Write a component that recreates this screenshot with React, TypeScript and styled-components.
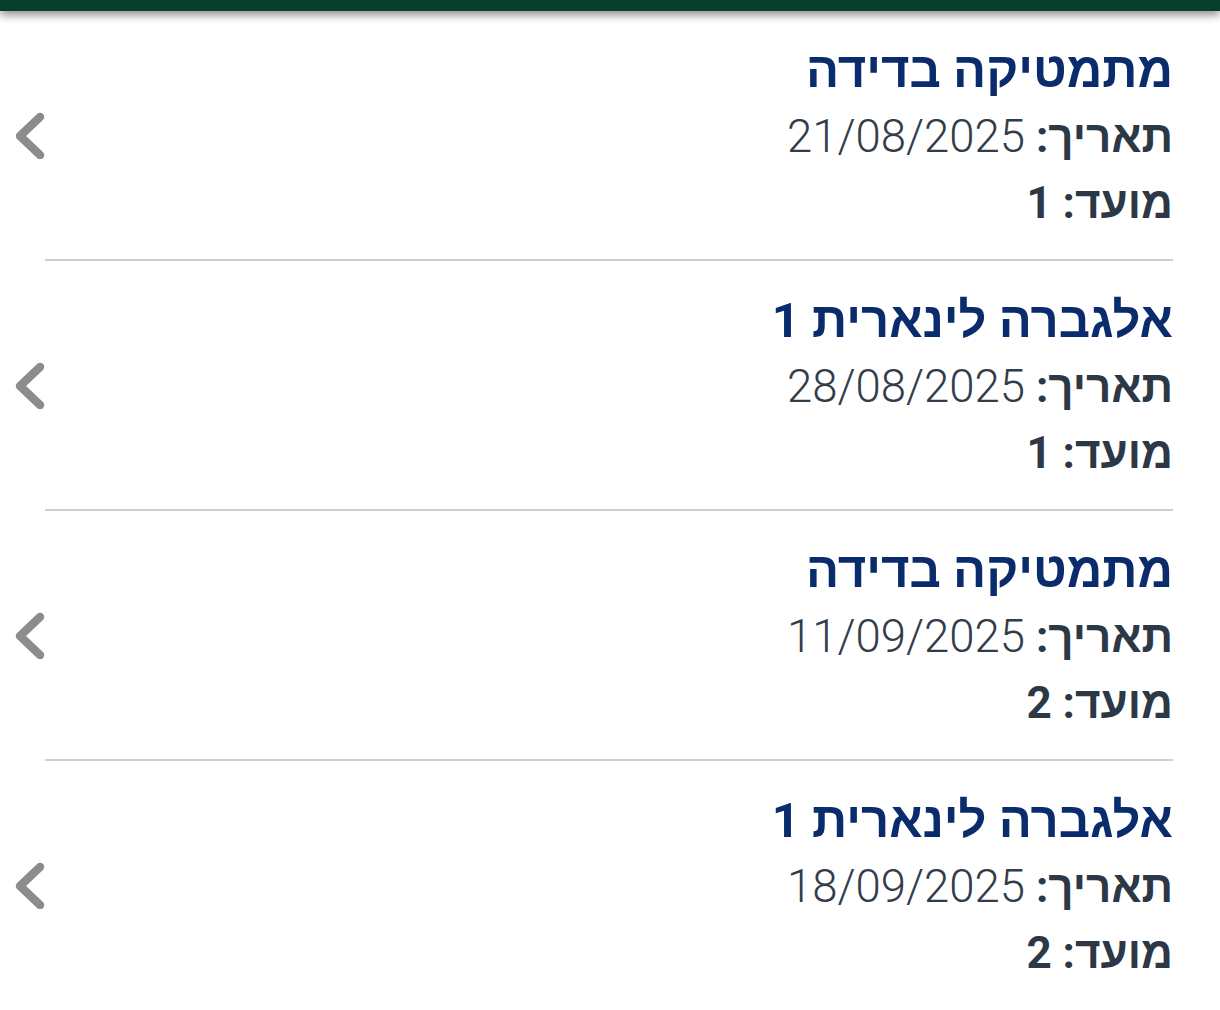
import React from "react";
import styled, { createGlobalStyle } from "styled-components";

const Global = createGlobalStyle`
  html, body {
    margin: 0;
    padding: 0;
    background: #fff;
    overflow: hidden;
  }
  body {
    font-family: Roboto, "Noto Sans", "Liberation Sans", sans-serif;
  }
`;

const Page = styled.div`
  width: 1220px;
  height: 1010px;
  overflow: hidden;
  background: #fff;
`;

const TopBar = styled.div`
  height: 11px;
  background: #073d2b;
  box-shadow: 0 4px 9px rgba(0, 0, 0, 0.45);
  position: relative;
  z-index: 2;
`;

const List = styled.div`
  display: flex;
  flex-direction: column;
`;

const Row = styled.div`
  display: flex;
  flex-direction: row-reverse;
  align-items: center;
  justify-content: space-between;
  height: 248px;
  padding-right: 47px;
  padding-left: 12px;
`;

const Info = styled.div`
  direction: rtl;
  display: flex;
  flex-direction: column;
  align-items: flex-start;
  padding-top: 4px;
`;

const Title = styled.div`
  font-size: 49px;
  font-weight: 700;
  color: #0b2c6c;
  line-height: 66px;
`;

const Line = styled.div`
  font-size: 44px;
  color: #2d3846;
  line-height: 66px;
`;

const Label = styled.span`
  font-weight: 700;
`;

const Value = styled.span<{ $bold?: boolean }>`
  font-weight: ${(p) => (p.$bold ? 700 : 300)};
  font-size: ${(p) => (p.$bold ? "44px" : "45.5px")};
  color: ${(p) => (p.$bold ? "#2d3846" : "#333d4a")};
`;

const Divider = styled.div`
  height: 2px;
  background: #cfcfcf;
  margin: 0 47px 0 45px;
`;

const Chevron = () => (
  <svg width="36" height="48" viewBox="0 0 36 48">
    <path
      d="M28 6 L8 25 L28 44"
      fill="none"
      stroke="#8c8c8c"
      strokeWidth="8.5"
      strokeLinecap="round"
      strokeLinejoin="round"
    />
  </svg>
);

const exams = [
  { title: "מתמטיקה בדידה", date: "21/08/2025", moed: "1" },
  { title: "אלגברה לינארית 1", date: "28/08/2025", moed: "1" },
  { title: "מתמטיקה בדידה", date: "11/09/2025", moed: "2" },
  { title: "אלגברה לינארית 1", date: "18/09/2025", moed: "2" },
];

export default function App() {
  return (
    <Page>
      <Global />
      <TopBar />
      <List>
        {exams.map((e, i) => (
          <React.Fragment key={i}>
            {i > 0 && <Divider />}
            <Row>
              <Info>
                <Title>{e.title}</Title>
                <Line>
                  <Label>תאריך:</Label> <Value>{e.date}</Value>
                </Line>
                <Line>
                  <Label>מועד:</Label> <Value $bold>{e.moed}</Value>
                </Line>
              </Info>
              <Chevron />
            </Row>
          </React.Fragment>
        ))}
      </List>
    </Page>
  );
}
